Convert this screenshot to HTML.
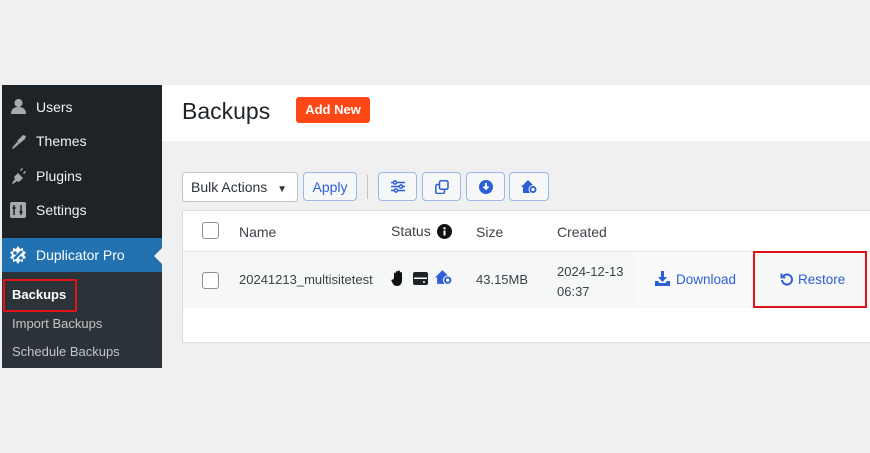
<!DOCTYPE html>
<html><head><style>
body{margin:0;width:870px;height:453px;background:#f0f0f1;font-family:"Liberation Sans",sans-serif;position:relative;overflow:hidden}
.a{position:absolute}
.side{left:2px;top:85px;width:160px;height:283px;background:#1d2327}
.mi{color:#f0f0f1;font-size:14px;left:36px}
.btn{top:172px;height:29px;border:1px solid #9ab8e8;border-radius:4px;background:#f6f7f7;box-sizing:border-box;color:#2c5fd6;display:flex;align-items:center;justify-content:center}
.txt{color:#3c434a;font-size:14px}
</style></head><body>
<div class="a side"></div>
<svg class="a" style="left:10px;top:98px" width="17" height="17" viewBox="0 0 17 17" fill="#a7aaad"><circle cx="8.5" cy="5" r="4"/><path d="M1 16c0-5 3-7 7.5-7s7.5 2 7.5 7z"/></svg>
<div class="a mi" style="top:99px">Users</div>
<svg class="a" style="left:10px;top:133px" width="17" height="17" viewBox="0 0 17 17" fill="#a7aaad"><path d="M2 15l5-6 2 2-6 5zM7 8l6-6 3 1-1 3-6 5z"/></svg>
<div class="a mi" style="top:133px">Themes</div>
<svg class="a" style="left:10px;top:167px" width="17" height="17" viewBox="0 0 17 17" fill="#a7aaad"><path d="M2 16l3-4-1-2 4-4 5 5-4 4-2-1-4 3zM10 3l2-2 1 1-2 2zM13 6l2-2 1 1-2 2z"/></svg>
<div class="a mi" style="top:168px">Plugins</div>
<svg class="a" style="left:10px;top:202px" width="16" height="16" viewBox="0 0 16 16"><rect width="16" height="16" rx="2" fill="#a7aaad"/><path d="M4 3v10M11 3v10" stroke="#1d2327" stroke-width="1.5"/><rect x="2.5" y="5" width="3" height="2" fill="#1d2327"/><rect x="9.5" y="9" width="3" height="2" fill="#1d2327"/></svg>
<div class="a mi" style="top:202px">Settings</div>
<div class="a" style="left:2px;top:238px;width:160px;height:34px;background:#2271b1"></div>
<svg class="a" style="left:8px;top:246px" width="20" height="19" viewBox="0 0 20 19" fill="#fff"><path d="M10 0l2 3 3-1 0 3 3 1-2 3 2 3-3 1 0 3-3-1-2 3-2-3-3 1 0-3-3-1 2-3-2-3 3-1 0-3 3 1z"/><path d="M6 13L14 5" stroke="#2271b1" stroke-width="2.5"/><circle cx="7" cy="7" r="1.8" fill="#2271b1"/><circle cx="13" cy="12" r="1.8" fill="#2271b1"/></svg>
<div class="a mi" style="top:247px;color:#fff">Duplicator Pro</div>
<div class="a" style="left:154px;top:248px;width:0;height:0;border:8px solid transparent;border-right-color:#f0f0f1;border-left:0"></div>
<div class="a" style="left:2px;top:272px;width:160px;height:96px;background:#2c3338"></div>
<div class="a" style="left:3px;top:279px;width:74px;height:33px;border:2px solid #e0131b;box-sizing:border-box"></div>
<div class="a" style="left:12px;top:287px;color:#fff;font-weight:bold;font-size:13px">Backups</div>
<div class="a" style="left:12px;top:316px;color:#c3c4c7;font-size:13px">Import Backups</div>
<div class="a" style="left:12px;top:344px;color:#c3c4c7;font-size:13px">Schedule Backups</div>
<div class="a" style="left:162px;top:85px;width:708px;height:56px;background:#fff"></div>
<div class="a" style="left:182px;top:98px;font-size:23px;color:#1d2327">Backups</div>
<div class="a" style="left:296px;top:97px;width:74px;height:26px;background:#fe4716;border-radius:3px;color:#fff;font-weight:bold;font-size:13px;line-height:26px;text-align:center">Add New</div>
<div class="a" style="left:182px;top:172px;width:116px;height:30px;background:#fff;border:1px solid #c3c4c7;border-radius:4px;box-sizing:border-box;font-size:14px;color:#2c3338;line-height:28px;padding-left:8px">Bulk Actions <span style="font-size:10px;margin-left:6px">▼</span></div>
<div class="a btn" style="left:303px;width:54px;font-size:14px">Apply</div>
<div class="a" style="left:367px;top:175px;width:1px;height:24px;background:#c3c4c7"></div>
<div class="a btn" style="left:378px;width:39px"><svg width="14" height="13" viewBox="0 0 14 13" stroke="#2c5fd6" stroke-width="1.5" fill="#fff"><path d="M0 2.5h14M0 6.5h14M0 10.5h14"/><circle cx="4" cy="2.5" r="1.6"/><circle cx="10" cy="6.5" r="1.6"/><circle cx="5" cy="10.5" r="1.6"/></svg></div>
<div class="a btn" style="left:422px;width:39px"><svg width="14" height="14" viewBox="0 0 14 14" fill="none" stroke="#2c5fd6" stroke-width="1.5"><rect x="4.5" y="0.8" width="8.5" height="8.5" rx="1.5"/><path d="M9.5 10v2a1.5 1.5 0 0 1-1.5 1.5H2.3A1.5 1.5 0 0 1 .8 12V6A1.5 1.5 0 0 1 2.3 4.5H4"/></svg></div>
<div class="a btn" style="left:466px;width:39px"><svg width="14" height="14" viewBox="0 0 14 14"><circle cx="7" cy="7" r="7" fill="#2c5fd6"/><path d="M7 3v6M4.5 6.5L7 9l2.5-2.5" stroke="#fff" stroke-width="1.8" fill="none"/></svg></div>
<div class="a btn" style="left:509px;width:40px"><svg width="17" height="14" viewBox="0 0 17 14"><path d="M0 7L7 0l7 7h-2v6H2V7z" fill="#2c5fd6"/><circle cx="12" cy="9.5" r="4" fill="#2c5fd6" stroke="#f6f7f7" stroke-width="1"/><circle cx="12" cy="9.5" r="1.6" fill="#fff"/></svg></div>
<div class="a" style="left:182px;top:210px;width:688px;height:133px;background:#fff;border:1px solid #dcdcde;border-right:0;box-sizing:border-box"></div>
<div class="a" style="left:183px;top:251px;width:687px;height:56px;background:#f6f7f7;border-top:1px solid #e5e5e5"></div>
<div class="a" style="left:637px;top:252px;width:116px;height:55px;background:#fafafa"></div>
<div class="a" style="left:202px;top:222px;width:15px;height:15px;border:1px solid #8c8f94;border-radius:3px;background:#fff"></div>
<div class="a" style="left:202px;top:272px;width:15px;height:15px;border:1px solid #8c8f94;border-radius:3px;background:#fff"></div>
<div class="a txt" style="left:239px;top:224px">Name</div>
<div class="a txt" style="left:391px;top:223px">Status</div>
<svg class="a" style="left:437px;top:224px" width="15" height="15" viewBox="0 0 15 15"><circle cx="7.5" cy="7.5" r="7.5" fill="#111"/><rect x="6.5" y="6.5" width="2" height="5" fill="#fff"/><circle cx="7.5" cy="4.3" r="1.2" fill="#fff"/></svg>
<div class="a txt" style="left:476px;top:224px">Size</div>
<div class="a txt" style="left:557px;top:224px">Created</div>
<div class="a" style="left:239px;top:272px;font-size:13px;color:#3c434a">20241213_multisitetest</div>
<svg class="a" style="left:391px;top:270px" width="15" height="16" viewBox="0 0 15 16" fill="#111"><path d="M3 8V3.5a1 1 0 0 1 2 0V7V2a1 1 0 0 1 2 0v5V1.5a1 1 0 0 1 2 0V7V3a1 1 0 0 1 2 0v7c0 4-2 6-5 6S2 14 0.5 11c-.5-1 .5-2 1.5-1.3z"/></svg>
<svg class="a" style="left:413px;top:272px" width="15" height="13" viewBox="0 0 15 13"><rect width="15" height="13" rx="2" fill="#1d2327"/><rect x="1" y="5.5" width="13" height="1.5" fill="#fff"/><circle cx="11" cy="10" r="1" fill="#fff"/></svg>
<svg class="a" style="left:435px;top:270px" width="18" height="15" viewBox="0 0 17 14"><path d="M0 7L7 0l7 7h-2v6H2V7z" fill="#2c5fd6"/><circle cx="12" cy="9.5" r="4" fill="#2c5fd6" stroke="#f6f7f7" stroke-width="1"/><circle cx="12" cy="9.5" r="1.6" fill="#fff"/></svg>
<div class="a" style="left:476px;top:272px;font-size:13px;color:#3c434a">43.15MB</div>
<div class="a" style="left:557px;top:262px;font-size:13px;color:#3c434a;line-height:20px">2024-12-13<br>06:37</div>
<svg class="a" style="left:655px;top:271px" width="15" height="15" viewBox="0 0 15 15" fill="#2c5fd6"><path d="M6 0h3v6h3l-4.5 5L3 6h3z"/><path d="M0 10h3l1.5 2h6L12 10h3v5H0z"/></svg>
<div class="a" style="left:676px;top:272px;font-size:13.5px;color:#2c5fd6">Download</div>
<div class="a" style="left:753px;top:251px;width:114px;height:57px;border:2px solid #e0131b;box-sizing:border-box"></div>
<svg class="a" style="left:780px;top:272px" width="14" height="14" viewBox="0 0 14 14" fill="none" stroke="#2c5fd6" stroke-width="2"><path d="M3 4.5A5 5 0 1 1 2 8"/><path d="M1.5 1.5v4h4" stroke-width="1.8"/></svg>
<div class="a" style="left:798px;top:272px;font-size:13.5px;color:#2c5fd6">Restore</div>
</body></html>
